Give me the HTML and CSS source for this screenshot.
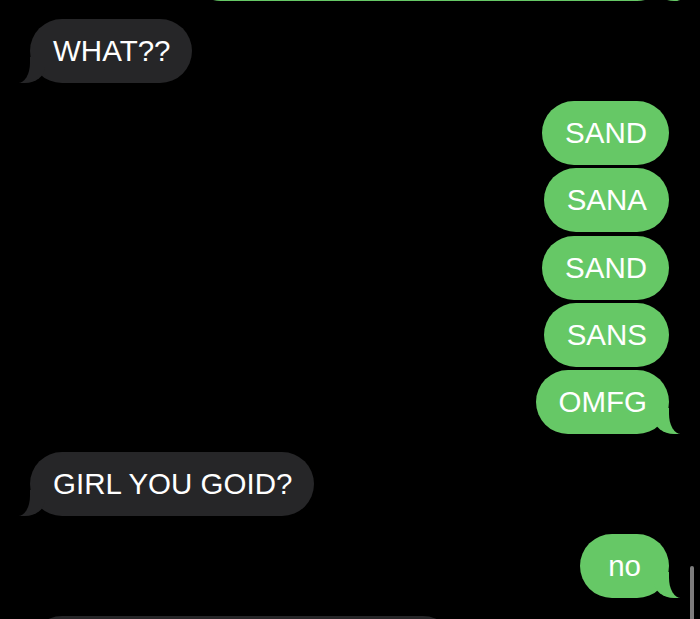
FILE: index.html
```html
<!DOCTYPE html>
<html lang="en">
<head>
  <meta charset="UTF-8">
  <title>Messages</title>
  <link rel="stylesheet" href="styles.css">
</head>
<body>

  <div class="thread">
    <!-- previous message, scrolled off the top -->
    <div class="row me"><div class="bubble green tail wide">&nbsp;</div></div>

    <div class="row them"><div class="bubble gray tail">WHAT??</div></div>

    <div class="group">
      <div class="row me"><div class="bubble green">SAND</div></div>
      <div class="row me"><div class="bubble green">SANA</div></div>
      <div class="row me"><div class="bubble green">SAND</div></div>
      <div class="row me"><div class="bubble green">SANS</div></div>
      <div class="row me"><div class="bubble green tail">OMFG</div></div>
    </div>

    <div class="row them"><div class="bubble gray tail">GIRL YOU GOID?</div></div>

    <div class="row me"><div class="bubble green tail short">no</div></div>

    <!-- next message, cut by the bottom of the screen -->
    <div class="row them"><div class="bubble gray wide-gray">&nbsp;</div></div>
  </div>

  <div class="scrollbar"></div>

</body>
</html>
```

FILE: styles.css
```css
* {
  box-sizing: border-box;
}

html, body {
  height: 100%;
}

body {
  margin: 0;
  background: #000;
  font-family: "Liberation Sans", Arial, Helvetica, sans-serif;
  overflow: hidden;
}

.thread {
  display: flex;
  flex-direction: column;
  gap: 18px;
  margin-top: -63px;
  padding: 0 31px 0 30px;
}

.group {
  display: flex;
  flex-direction: column;
  gap: 3.25px;
}

.row {
  display: flex;
}

.row.me {
  justify-content: flex-end;
}

.bubble {
  position: relative;
  height: 64px;
  padding: 0 22px 0 23px;
  border-radius: 32px;
  display: flex;
  align-items: center;
  font-size: 29.5px;
  color: #fff;
  white-space: nowrap;
}

.green {
  background: #66c866;
}

.gray {
  background: #262628;
}

.wide {
  width: 480px;
}

.wide-gray {
  width: 425px;
}

.short {
  padding: 0 28px;
}

/* bubble tails */
.tail::before,
.tail::after {
  content: "";
  position: absolute;
  bottom: 0;
  height: 26px;
}

.me .tail::before {
  right: -11px;
  width: 26px;
  background: inherit;
  border-bottom-left-radius: 20px 16px;
}

.me .tail::after {
  right: -30px;
  width: 30px;
  background: #000;
  border-bottom-left-radius: 12px 20px;
}

.them .tail::before {
  left: -11px;
  width: 26px;
  background: inherit;
  border-bottom-right-radius: 20px 16px;
}

.them .tail::after {
  left: -30px;
  width: 30px;
  background: #000;
  border-bottom-right-radius: 12px 20px;
}

.scrollbar {
  position: fixed;
  top: 566px;
  right: 6px;
  width: 4px;
  height: 60px;
  border-radius: 2px;
  background: #7d7d7d;
}
```
